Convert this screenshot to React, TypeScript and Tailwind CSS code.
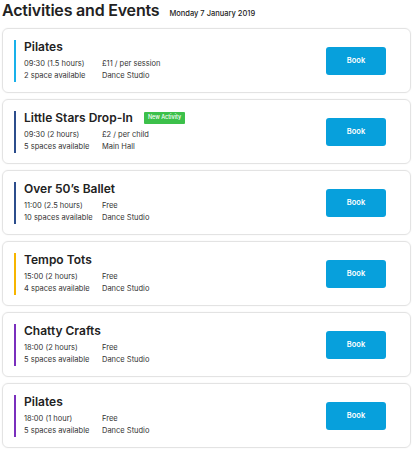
import React from "react";

type Item = {
  title: string;
  time: string;
  spaces: string;
  price: string;
  place: string;
  color: string;
  badge?: boolean;
};

const items: Item[] = [
  { title: "Pilates", time: "09:30 (1.5 hours)", spaces: "2 space available", price: "£11 / per session", place: "Dance Studio", color: "bg-[#19b1ea]" },
  { title: "Little Stars Drop-In", time: "09:30 (2 hours)", spaces: "5 spaces available", price: "£2 / per child", place: "Main Hall", color: "bg-[#2c4d8c]", badge: true },
  { title: "Over 50’s Ballet", time: "11:00 (2.5 hours)", spaces: "10 spaces available", price: "Free", place: "Dance Studio", color: "bg-[#2c4d8c]" },
  { title: "Tempo Tots", time: "15:00 (2 hours)", spaces: "4 spaces available", price: "Free", place: "Dance Studio", color: "bg-[#f7b500]" },
  { title: "Chatty Crafts", time: "18:00 (2 hours)", spaces: "5 spaces available", price: "Free", place: "Dance Studio", color: "bg-[#7a2fbd]" },
  { title: "Pilates", time: "18:00 (1 hour)", spaces: "5 spaces available", price: "Free", place: "Dance Studio", color: "bg-[#7a2fbd]" },
];

export default function App() {
  return (
    <div className="w-[413px] h-[451px] bg-white overflow-hidden text-[#222]" style={{ fontFamily: "Inter, 'Liberation Sans', sans-serif" }}>
      <div className="flex items-baseline pl-[2px] h-[28px] pt-[1px]">
        <h1 className="text-[16px] font-semibold leading-[18px] tracking-[-0.2px]">Activities and Events</h1>
        <span className="text-[7.5px] ml-[10px] font-medium">Monday 7 January 2019</span>
      </div>
      <div className="flex flex-col gap-[6px] px-[2px]">
        {items.map((it, i) => (
          <div key={i} className="h-[65px] rounded-[6px] border border-[#e3e3e3] shadow-[0_0_2px_rgba(0,0,0,0.06)] flex items-center pl-[11px] pr-[24px]">
            <div className={`w-[2px] h-[42px] ${it.color}`} />
            <div className="flex-1 pl-[8px] flex flex-col">
              <div className="flex items-center h-[16px]">
                <span className="text-[12px] font-semibold leading-[16px]">{it.title}</span>
                {it.badge && (
                  <span className="ml-[11px] bg-[#3cc04a] text-white text-[5.5px] font-medium leading-[11px] px-[4px] rounded-[1px] h-[12px] flex items-center">New Activity</span>
                )}
              </div>
              <div className="grid grid-cols-[78px_1fr] text-[7.5px] leading-[12.5px] mt-[3px] text-[#333]">
                <span>{it.time}</span>
                <span>{it.price}</span>
                <span>{it.spaces}</span>
                <span>{it.place}</span>
              </div>
            </div>
            <button className="w-[60px] h-[28px] rounded-[3px] bg-[#07a0dc] text-white text-[7.5px] font-semibold">Book</button>
          </div>
        ))}
      </div>
    </div>
  );
}
